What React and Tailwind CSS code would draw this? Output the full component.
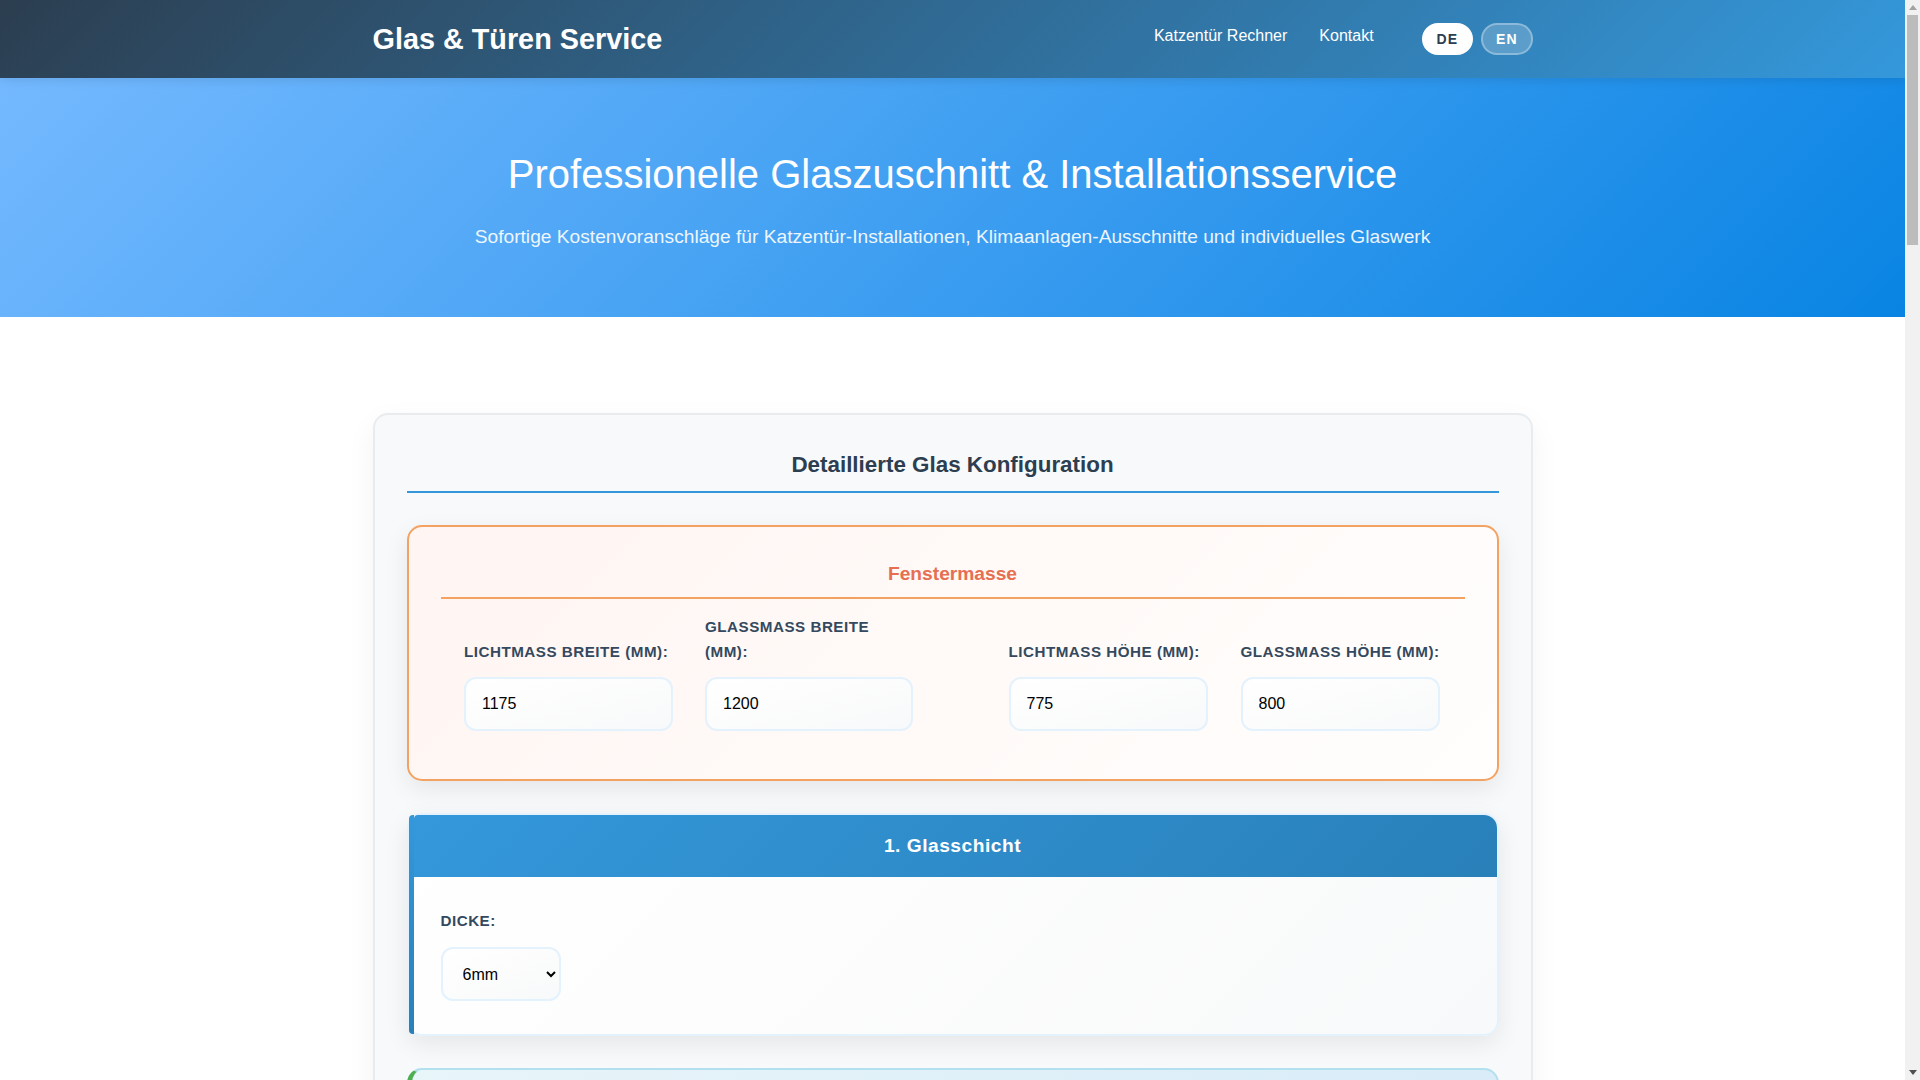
import React from "react";

function Field({ label, value, width }) {
  return (
    <div className={`flex flex-col justify-end ${width}`}>
      <label className="mb-[13px] text-[15.2px] font-bold uppercase leading-[25px] tracking-[0.5px] text-[#34495e]">
        {label}
      </label>
      <input
        type="text"
        defaultValue={value}
        className="h-[54px] w-full rounded-[12px] border-2 border-[#e3f2fd] bg-gradient-to-br from-white to-[#f8f9fa] px-4 text-[16px] text-black outline-none"
      />
    </div>
  );
}

function Scrollbar() {
  return (
    <div className="fixed bottom-0 right-0 top-0 z-50 flex w-[15px] flex-col bg-[#f1f1f1]">
      <div className="flex h-[15px] items-center justify-center">
        <svg width="8" height="5" viewBox="0 0 8 5"><path d="M4 0 8 5H0z" fill="#a3a3a3" /></svg>
      </div>
      <div className="ml-[2px] h-[230px] w-[11px] bg-[#bcbcbc]" />
      <div className="flex-1" />
      <div className="flex h-[15px] items-center justify-center">
        <svg width="8" height="5" viewBox="0 0 8 5"><path d="M0 0h8L4 5z" fill="#505050" /></svg>
      </div>
    </div>
  );
}

export default function App() {
  return (
    <div className="min-h-[4930px] w-[1905px] bg-white font-['Liberation_Sans',Arial,sans-serif] leading-[1.6]">
      <Scrollbar />
      <header className="relative z-10 bg-[linear-gradient(135deg,#2c3e50,#3498db)] py-4 shadow-[0_2px_10px_rgba(0,0,0,0.1)]">
        <div className="mx-auto flex max-w-[1200px] items-center justify-between px-5">
          <div className="text-[28.8px] font-bold text-white">Glas &amp; Türen Service</div>
          <div className="flex items-center gap-12">
            <nav className="flex gap-8 pb-[6px] text-[16px] text-white">
              <a>Katzentür Rechner</a>
              <a>Kontakt</a>
            </nav>
            <div className="flex gap-2">
              <button className="flex h-8 items-center rounded-[20px] border-2 border-white bg-white px-[13px] text-[14px] font-bold tracking-[1px] text-[#2c3e50]">
                DE
              </button>
              <button className="flex h-8 items-center rounded-[20px] border-2 border-white/30 bg-white/20 px-[13px] text-[14px] font-bold tracking-[1px] text-white">
                EN
              </button>
            </div>
          </div>
        </div>
      </header>

      <section className="bg-[linear-gradient(135deg,#74b9ff,#0984e3)] py-16 text-center text-white">
        <h1 className="mb-4 text-[40px] font-normal leading-[64px]">
          Professionelle Glaszuschnitt &amp; Installationsservice
        </h1>
        <p className="text-[19.2px] opacity-90">
          Sofortige Kostenvoranschläge für Katzentür-Installationen, Klimaanlagen-Ausschnitte und individuelles Glaswerk
        </p>
      </section>

      <main className="mx-auto max-w-[1200px] px-5 pt-[96px]">
        <div className="rounded-[15px] border-2 border-[#e9ecef] bg-[#f8f9fa] p-8 shadow-[0_10px_30px_rgba(0,0,0,0.05)]">
          <h2 className="mb-8 border-b-2 border-[#3498db] pb-2 text-center text-[22.4px] font-bold text-[#2c3e50]">
            Detaillierte Glas Konfiguration
          </h2>

          <div className="mb-8 rounded-[15px] border-2 border-[#f4a261] bg-[linear-gradient(135deg,#fff5f2,#fffefd)] p-8 shadow-[0_8px_25px_rgba(0,0,0,0.08)]">
            <h3 className="mb-[15px] border-b-2 border-[#f4a261] pb-2 text-center text-[19.2px] font-bold text-[#e76f51]">
              Fenstermasse
            </h3>
            <div className="flex justify-between pb-4 pl-[23.5px] pr-[25px]">
              <div className="flex gap-8">
                <Field label="Lichtmass Breite (mm):" value="1175" width="w-[209px]" />
                <Field label="Glassmass Breite (mm):" value="1200" width="w-[208px]" />
              </div>
              <div className="flex gap-[33px]">
                <Field label="Lichtmass Höhe (mm):" value="775" width="w-[199px]" />
                <Field label="Glassmass Höhe (mm):" value="800" width="w-[199px]" />
              </div>
            </div>
          </div>

          <div className="mb-8 flex rounded-[15px] border-2 border-[#e3f2fd] bg-[linear-gradient(135deg,#ffffff,#f8f9fa)] shadow-[0_8px_25px_rgba(0,0,0,0.08)]">
            <div className="w-[5px] shrink-0 rounded-l-[4px] bg-gradient-to-b from-[#3498db] to-[#2980b9]" />
            <div className="min-w-0 flex-1">
              <div className="rounded-tl-[4px] rounded-tr-[13px] bg-[linear-gradient(135deg,#3498db,#2980b9)] pr-[5px] text-center text-[19.2px] font-bold leading-[62px] tracking-[0.5px] text-white">
                1. Glasschicht
              </div>
              <div className="pb-[33px] pl-[27px] pt-8">
                <label className="mb-[14px] block text-[15.2px] font-bold uppercase leading-[24px] tracking-[0.5px] text-[#34495e]">
                  Dicke:
                </label>
                <select
                  defaultValue="6mm"
                  className="h-[54px] w-[120px] rounded-[12px] border-2 border-[#e3f2fd] bg-gradient-to-br from-white to-[#f8f9fa] px-4 text-[16px] text-black outline-none"
                >
                  <option>4mm</option>
                  <option>6mm</option>
                  <option>8mm</option>
                  <option>10mm</option>
                </select>
              </div>
            </div>
          </div>

          <div className="h-[220px] rounded-[15px] border-2 border-l-[5px] border-[#b2e0ee] border-l-[#4caf50] bg-[linear-gradient(135deg,#e8f5f9,#d6eaf8)]" />
        </div>
      </main>
    </div>
  );
}
